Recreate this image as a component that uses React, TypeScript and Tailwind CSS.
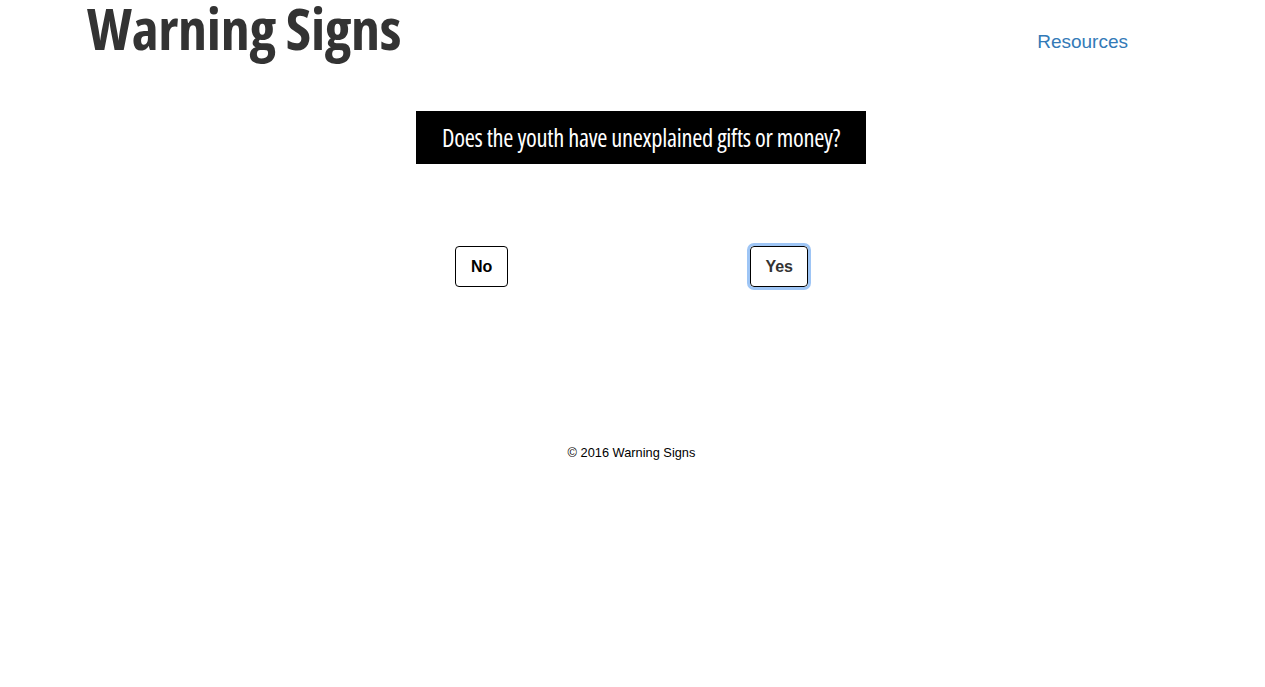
export default function App() {
	return (
		<div className="w-[1265px] min-h-[687px] bg-white font-['Liberation_Sans',Arial,sans-serif] text-[#333]">
			<header className="flex items-start justify-between pl-[87px] pr-[137px]">
				<h1 className="font-['Open_Sans',sans-serif] [font-stretch:75%] font-bold text-[58px] leading-[56px] tracking-[-0.3px] text-[#333]">
					Warning Signs
				</h1>
				<a href="#" className="mt-[30px] text-[19px] leading-[24px] text-[#337ab7]">
					Resources
				</a>
			</header>

			<main className="flex flex-col items-center mt-[55px] pl-[17px]">
				<div className="w-[450px] h-[53px] bg-black flex items-center justify-center">
					<p className="font-['Open_Sans',sans-serif] [font-stretch:75%] text-white text-[24.5px] leading-none tracking-[-0.3px] pt-[1px]">
						Does the youth have unexplained gifts or money?
					</p>
				</div>

				<div className="flex w-[450px] justify-between mt-[82px] pl-[39px] pr-[58px]">
					<button className="h-[41px] px-[15px] rounded-[4px] border border-black bg-white text-black font-bold text-[16px]">
						No
					</button>
					<button className="h-[41px] px-[14px] rounded-[4px] border border-black bg-white text-[#333] font-bold text-[16px] outline outline-[3px] outline-[#9ec5f5]">
						Yes
					</button>
				</div>
			</main>

			<footer className="mt-[156px] text-center text-[12.8px] text-black pr-[2px]">
				© 2016 Warning Signs
			</footer>
		</div>
	);
}
